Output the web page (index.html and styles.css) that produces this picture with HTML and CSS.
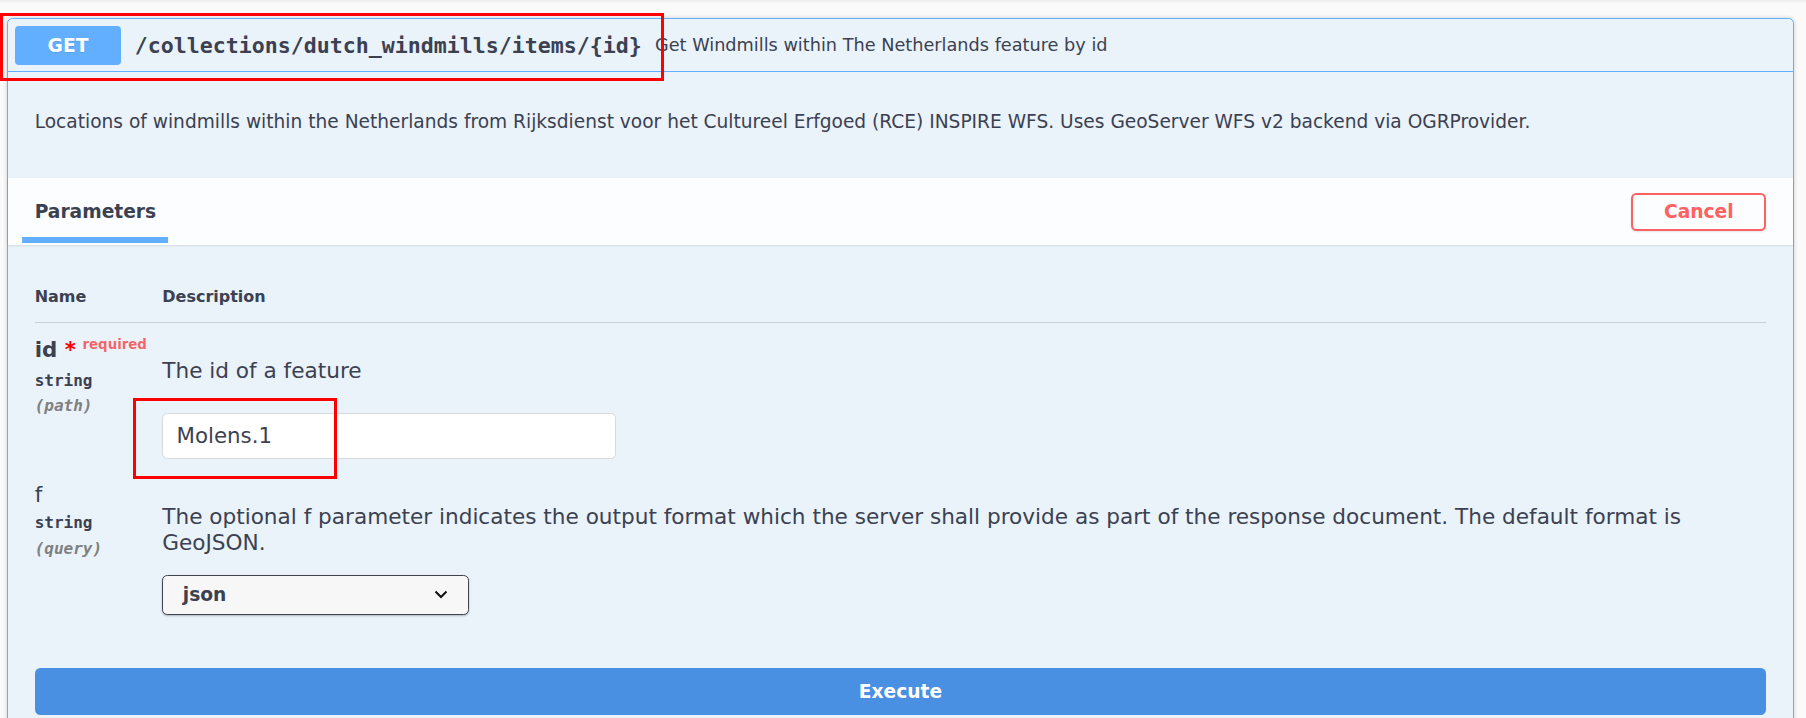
FILE: index.html
```html
<!DOCTYPE html>
<html>
<head>
<meta charset="utf-8">
<link rel="stylesheet" href="styles.css">
</head>
<body>
<div class="topshade"></div>
<div class="page">
  <div class="opblock">
    <div class="summary">
      <span class="method">GET</span>
      <span class="path">/collections/dutch_windmills/items/{id}</span>
      <div class="sumdesc">Get Windmills within The Netherlands feature by id</div>
    </div>
    <div class="descwrap">
      <p>Locations of windmills within the Netherlands from Rijksdienst voor het Cultureel Erfgoed (RCE) INSPIRE WFS. Uses GeoServer WFS v2 backend via OGRProvider.</p>
    </div>
    <div class="section-header">
      <div class="tab"><h4><span>Parameters</span></h4></div>
      <button class="btn cancel">Cancel</button>
    </div>
    <div class="table-container">
      <div class="ptable">
        <div class="th">Name</div>
        <div class="th">Description</div>

        <div class="col-name">
          <div class="pname required">id<span class="star">&nbsp;*</span><span class="req">required</span></div>
          <div class="ptype">string</div>
          <div class="pin">(path)</div>
        </div>
        <div class="col-desc">
          <p>The id of a feature</p>
          <div class="input">Molens.1</div>
        </div>

        <div class="col-name">
          <div class="pname">f</div>
          <div class="ptype">string</div>
          <div class="pin">(query)</div>
        </div>
        <div class="col-desc">
          <p>The optional f parameter indicates the output format which the server shall provide as part of the response document. The default format is GeoJSON.</p>
          <div class="select"><span>json</span>
            <svg class="chev" width="14" height="9" viewBox="0 0 14 9"><path d="M1.5 1.5 L7 7 L12.5 1.5" fill="none" stroke="#111" stroke-width="2"/></svg>
          </div>
        </div>
      </div>
    </div>
    <div class="execute-wrapper">
      <button class="btn execute">Execute</button>
    </div>
  </div>
</div>
<div class="mark mark1"></div>
<div class="mark mark2"></div>
</body>
</html>
```
FILE: styles.css
```css
html, body {
  margin: 0;
  padding: 0;
}
body {
  background: #fafafa;
  width: 1806px;
  height: 718px;
  overflow: hidden;
  position: relative;
  font-family: "DejaVu Sans", sans-serif;
  color: #3b4151;
}
.topshade {
  height: 4px;
  background: linear-gradient(rgba(0,0,0,0.05), rgba(0,0,0,0));
}
.page {
  padding: 14px 12px 0 7px;
}
.opblock {
  border: 1px solid #61affe;
  border-radius: 5.33px;
  background: rgba(97,175,254,0.1);
  box-shadow: 0 0 4px rgba(0,0,0,0.19);
}
.summary {
  display: flex;
  align-items: center;
  padding: 6.67px;
  border-bottom: 1px solid #61affe;
}
.method {
  min-width: 106.67px;
  padding: 8px 0;
  line-height: 23px;
  text-align: center;
  background: #61affe;
  color: #fff;
  font-weight: 700;
  font-size: 18.67px;
  border-radius: 4px;
  text-shadow: 0 1px 0 rgba(0,0,0,0.1);
}
.path {
  flex-shrink: 0;
  padding: 0 13.33px;
  font-family: "DejaVu Sans Mono", monospace;
  font-weight: 700;
  font-size: 21.6px;
  color: #3b4151;
}
.sumdesc {
  flex: 1 1 auto;
  font-size: 17.7px;
  color: #3b4151;
}
.descwrap {
  padding: 20px 26.67px;
  margin-bottom: 6.67px;
}
.descwrap p {
  margin: 18.67px 0;
  font-size: 18.6px;
  line-height: 22px;
}
.section-header {
  box-sizing: border-box;
  height: 66.67px;
  display: flex;
  align-items: center;
  padding: 10.67px 26.67px;
  background: rgba(255,255,255,0.8);
  box-shadow: 0 1px 2px rgba(0,0,0,0.1);
}
.tab {
  flex: 1;
}
.tab h4 {
  margin: 0;
  font-size: 18.67px;
  line-height: 22px;
  font-weight: 700;
  color: #3b4151;
}
.tab h4 span {
  position: relative;
}
.tab h4 span::after {
  content: "";
  position: absolute;
  left: 50%;
  bottom: -21px;
  width: 120%;
  height: 5.33px;
  transform: translateX(-50%);
  background: #61affe;
}
.btn {
  font-family: "DejaVu Sans", sans-serif;
  font-weight: 700;
  font-size: 18.67px;
  border-radius: 5.33px;
  cursor: pointer;
}
.cancel {
  box-sizing: border-box;
  height: 38px;
  width: 135px;
  padding: 0;
  background: transparent;
  border: 2.67px solid #ff6060;
  color: #ff6060;
  box-shadow: 0 1px 2px rgba(0,0,0,0.1);
}
.table-container {
  padding: 26.67px;
}
.ptable {
  display: grid;
  grid-template-columns: 127.6px 1fr;
}
.th {
  padding: 16px 0;
  font-size: 16px;
  line-height: 18.67px;
  font-weight: 700;
  border-bottom: 1px solid rgba(59,65,81,0.2);
}
.col-name {
  padding: 13.33px 0;
}
.col-desc {
  padding: 13.33px 0 0;
  display: flex;
  flex-direction: column;
  align-items: flex-start;
}
.pname {
  font-size: 21.33px;
  line-height: 25px;
  white-space: nowrap;
}
.pname.required {
  font-weight: 700;
}
.star {
  color: #f00;
}
.req {
  position: relative;
  top: -8px;
  padding: 6.67px;
  font-size: 13.33px;
  color: rgba(255,0,0,0.6);
}
.ptype {
  padding: 5px 0;
  font-family: "DejaVu Sans Mono", monospace;
  font-weight: 700;
  font-size: 16px;
  line-height: 21.5px;
}
.pin {
  font-family: "DejaVu Sans Mono", monospace;
  font-style: italic;
  font-weight: 700;
  font-size: 16px;
  line-height: 19px;
  color: #808080;
}
.col-desc p {
  margin: 21.33px 0 18px;
  font-size: 21.6px;
  line-height: 26.67px;
}
.input {
  box-sizing: border-box;
  width: 453.33px;
  height: 46.5px;
  margin: 10px 0;
  padding: 0 13.33px;
  display: flex;
  align-items: center;
  background: #fff;
  border: 1px solid #d9d9d9;
  border-radius: 5.33px;
  font-size: 21.33px;
  color: #3b4151;
}
.select {
  box-sizing: border-box;
  width: 306.5px;
  height: 39.5px;
  display: flex;
  align-items: center;
  justify-content: space-between;
  padding: 0 20px 0 19.5px;
  background: #f7f7f7;
  border: 1px solid #41444e;
  border-radius: 5.33px;
  box-shadow: 0 1px 2px rgba(0,0,0,0.25);
  font-weight: 700;
  font-size: 18.67px;
  color: #3b4151;
}
.chev {
  display: block;
}
.execute-wrapper {
  padding: 26.67px;
}
.execute {
  display: block;
  box-sizing: border-box;
  width: 100%;
  height: 46.67px;
  padding: 0;
  background: #4990e2;
  border: 2.67px solid #4990e2;
  color: #fff;
}
.mark {
  position: absolute;
  box-sizing: border-box;
  border: 3px solid #ff0000;
}
.mark1 {
  left: 0;
  top: 13px;
  width: 664px;
  height: 68px;
}
.mark2 {
  left: 133px;
  top: 398px;
  width: 204px;
  height: 81px;
}
```
